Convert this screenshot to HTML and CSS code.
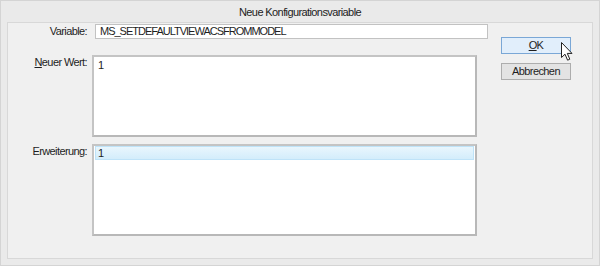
FILE: index.html
```html
<!DOCTYPE html>
<html lang="de">
<head>
    <meta charset="UTF-8">
    <title>Neue Konfigurationsvariable</title>
    <link rel="stylesheet" href="styles.css">
</head>
<body>
    <div class="window">
        <div class="titlebar">Neue Konfigurationsvariable</div>
        <div class="client">
            <div class="form">
                <div class="row row-variable">
                    <label class="label">Variable:</label>
                    <div class="input">MS_SETDEFAULTVIEWACSFROMMODEL</div>
                </div>
                <div class="row row-value">
                    <label class="label"><u>N</u>euer Wert:</label>
                    <div class="textbox">1</div>
                </div>
                <div class="row row-ext">
                    <label class="label">Erweiterung:</label>
                    <div class="listbox">
                        <div class="list-item">1</div>
                    </div>
                </div>
            </div>
            <div class="buttons">
                <div class="button default"><u>O</u>K
                    <svg class="cursor" width="12" height="19" viewBox="0 0 12 19">
                        <path d="M0.5 0.5 L0.5 15.5 L4 12.2 L6.6 18.2 L8.8 17.2 L6.3 11.4 L11 11.4 Z" fill="#ffffff" stroke="#222222" stroke-width="1" stroke-linejoin="round"/>
                    </svg>
                </div>
                <div class="button">Abbrechen</div>
            </div>
        </div>
    </div>
</body>
</html>
```

FILE: styles.css
```css
/* Window frame */
body {
    margin: 0;
    background-color: #e8e8e8;
    font-family: "Liberation Sans", Arial, sans-serif;
    font-size: 11px;
    letter-spacing: -0.6px;
    color: #1e1e1e;
}
.window {
    width: 600px;
    height: 266px;
    box-sizing: border-box;
    border: 1px solid #d4d4d4;
    background-color: #eaeaea;
    display: flex;
    flex-direction: column;
}
.titlebar {
    height: 21px;
    line-height: 22px;
    text-align: center;
    color: #222222;
}
.client {
    flex: 1;
    margin: 0 6px 6px 6px;
    border: 1px solid #d8d8d8;
    background-color: #f0f0f0;
    display: flex;
}

/* Form rows */
.form {
    width: 480px;
    padding-top: 1px;
}
.row {
    display: flex;
}
.label {
    width: 79px;
    flex-shrink: 0;
    text-align: right;
}
.row-variable .label {
    line-height: 15px;
    margin-right: 8px;
}
.row-value {
    margin-top: 16px;
}
.row-ext {
    margin-top: 7px;
}
.row-value .label,
.row-ext .label {
    margin-right: 5px;
    padding-top: 1px;
}
.input {
    width: 393px;
    height: 15px;
    box-sizing: border-box;
    border: 1px solid #c2c2c2;
    background-color: #ffffff;
    padding-left: 4px;
    line-height: 13px;
    letter-spacing: -1px;
}
.textbox,
.listbox {
    width: 385px;
    box-sizing: border-box;
    border: 2px solid #c4c4c4;
    border-right-color: #b8b8b8;
    border-bottom-color: #b8b8b8;
    background-color: #ffffff;
}
.textbox {
    height: 82px;
    padding: 2px 0 0 4px;
    line-height: 13px;
}
.listbox {
    height: 92px;
    padding: 0 1px;
}
.list-item {
    height: 12px;
    line-height: 13px;
    padding-left: 2px;
    background: linear-gradient(#e9f6fd, #d3edfb);
    border: 1px solid #bfe3f8;
}

/* Buttons */
.buttons {
    padding-top: 14px;
    margin-left: 13px;
    display: flex;
    flex-direction: column;
    gap: 9px;
}
.button {
    position: relative;
    width: 70px;
    height: 17px;
    box-sizing: border-box;
    border: 1px solid #adadad;
    background-color: #e3e3e3;
    text-align: center;
    line-height: 15px;
}
.button.default {
    border-color: #7aa7d6;
    background-color: #e1eefb;
}
.cursor {
    position: absolute;
    left: 59px;
    top: 4px;
}
```
